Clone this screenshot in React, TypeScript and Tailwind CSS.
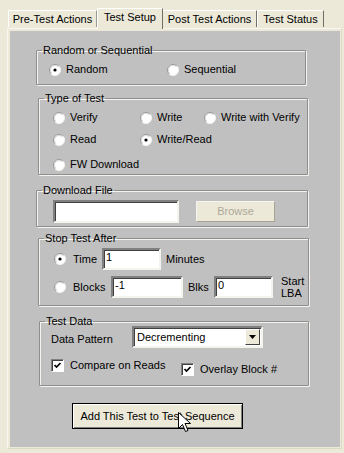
import React from "react";

const font = { fontFamily: '"Liberation Sans", Arial, sans-serif' };

function Radio({ checked = false }: { checked?: boolean }) {
  return (
    <svg width="12" height="12" viewBox="0 0 12 12" className="shrink-0">
      <circle cx="6" cy="6" r="5.5" fill="#fff" />
      <path d="M2.1 9.9 A5.5 5.5 0 0 1 9.9 2.1" stroke="#9a9a9a" fill="none" />
      <path d="M2.8 9.2 A4.5 4.5 0 0 1 9.2 2.8" stroke="#d8d8d8" fill="none" />
      <path d="M9.9 2.1 A5.5 5.5 0 0 1 2.1 9.9" stroke="#f4f3ee" fill="none" />
      {checked && <circle cx="6" cy="6" r="1.6" fill="#000" />}
    </svg>
  );
}

function Check() {
  return (
    <span className="w-[13px] h-[13px] shrink-0 bg-white border border-t-[#808080] border-l-[#808080] border-b-white border-r-white shadow-[inset_1px_1px_0_#404040] flex items-center justify-center">
      <svg width="9" height="9" viewBox="0 0 9 9">
        <path d="M1.5 4 L3.5 6 L7.5 2" stroke="#000" strokeWidth="1.7" fill="none" />
      </svg>
    </span>
  );
}

function Field({ value, className }: { value: string; className: string }) {
  return (
    <div
      className={`bg-white border-2 border-t-[#808080] border-l-[#808080] border-b-[#f4f3ee] border-r-[#f4f3ee] shadow-[inset_1px_1px_0_#404040] px-[2px] leading-[14px] ${className}`}
    >
      {value}
    </div>
  );
}

function Group({ title, className, children }: { title: string; className: string; children?: React.ReactNode }) {
  return (
    <fieldset
      className={`border border-[#8e8e8e] shadow-[1px_1px_0_#f4f3ee,inset_1px_1px_0_#f4f3ee] rounded-[1px] ${className}`}
    >
      <legend className="ml-[5px] px-[1px] leading-[13px]">{title}</legend>
      {children}
    </fieldset>
  );
}

function Opt({ label, checked, className = "" }: { label: string; checked?: boolean; className?: string }) {
  return (
    <div className={`flex items-center gap-[5px] leading-[13px] ${className}`}>
      <Radio checked={checked} />
      <span>{label}</span>
    </div>
  );
}

export default function App() {
  return (
    <div className="w-[344px] h-[453px] bg-[#ece9d8] text-[11px] text-black relative overflow-hidden" style={font}>
      {/* tabs */}
      <div className="flex items-end pt-[7px] pl-[8px] h-[28px] relative z-10">
        <div className="h-[17px] w-[89px] border-t border-l border-white border-r border-r-[#9a9a90] flex items-center justify-center leading-[13px] mb-px">
          Pre-Test Actions
        </div>
        <div className="h-[21px] w-[66px] bg-[#ece9d8] border-t border-l border-white border-r border-r-[#6f6f68] flex items-center justify-center leading-[13px] pb-[3px] -mb-px">
          Test Setup
        </div>
        <div className="h-[17px] w-[94px] border-t border-white border-r border-r-[#6f6f68] flex items-center justify-center leading-[13px] mb-px">
          Post Test Actions
        </div>
        <div className="h-[17px] w-[67px] border-t border-l border-white border-r border-r-[#6f6f68] flex items-center justify-center leading-[13px] mb-px">
          Test Status
        </div>
      </div>

      {/* panel */}
      <div className="ml-[7px] mr-[2px] h-[421px] border border-[#f7f6f0] border-r-[#dcd9c8] border-b-[#dcd9c8] bg-[#ece9d8] p-[2px] pr-[1px] pb-[1px]">
        <div className="h-full bg-[#c0c0c0] pt-[13px] flex flex-col">
          <Group title="Random or Sequential" className="ml-[26px] w-[270px] h-[41px]">
            <div className="flex pt-[6px] pl-[12px]">
              <Opt label="Random" checked className="w-[118px]" />
              <Opt label="Sequential" />
            </div>
          </Group>

          <Group title="Type of Test" className="ml-[28px] mt-[7px] w-[270px] h-[83px]">
            <div className="pl-[14px] pt-[6px] flex flex-col gap-[9px]">
              <div className="flex">
                <Opt label="Verify" className="w-[87px]" />
                <Opt label="Write" className="w-[64px]" />
                <Opt label="Write with Verify" />
              </div>
              <div className="flex">
                <Opt label="Read" className="w-[87px]" />
                <Opt label="Write/Read" checked />
              </div>
              <div className="flex mt-[3px]">
                <Opt label="FW Download" />
              </div>
            </div>
          </Group>

          <Group title="Download File" className="ml-[26px] mt-[9px] w-[272px] h-[43px]">
            <div className="flex items-center pl-[16px] pt-[3px]">
              <Field value="" className="w-[126px] h-[23px]" />
              <div className="ml-[17px] w-[79px] h-[21px] bg-[#ece9d8] border border-[#f6f5f0] border-r-[#a8a596] border-b-[#a8a596] text-[#aca899] flex items-center justify-center leading-[13px]">
                Browse
              </div>
            </div>
          </Group>

          <Group title="Stop Test After" className="ml-[28px] mt-[5px] w-[271px] h-[74px]">
            <div className="pl-[15px] pt-[3px] flex flex-col gap-[5px]">
              <div className="flex items-center">
                <Radio checked />
                <span className="ml-[7px] w-[29px]">Time</span>
                <Field value="1" className="w-[59px] h-[22px]" />
                <span className="ml-[5px]">Minutes</span>
              </div>
              <div className="flex items-center">
                <Radio />
                <span className="ml-[7px] w-[38px]">Blocks</span>
                <Field value="-1" className="w-[72px] h-[22px]" />
                <span className="ml-[5px] w-[26px]">Blks</span>
                <Field value="0" className="w-[59px] h-[22px]" />
                <span className="ml-[8px] leading-[12px]">
                  Start
                  <br />
                  LBA
                </span>
              </div>
            </div>
          </Group>

          <Group title="Test Data" className="ml-[29px] mt-[9px] w-[270px] h-[71px]">
            <div className="pl-[11px]">
              <div className="flex items-center -mt-[2px]">
                <span className="w-[81px] mt-[5px]">Data Pattern</span>
                <div className="w-[131px] h-[22px] bg-white border-2 border-t-[#808080] border-l-[#808080] border-b-[#f4f3ee] border-r-[#f4f3ee] shadow-[inset_1px_1px_0_#404040] flex items-center pl-[3px] pr-[1px]">
                  <span className="flex-1 leading-[14px]">Decrementing</span>
                  <div className="w-[15px] h-[16px] bg-[#ece9d8] border border-[#fff] border-r-[#404040] border-b-[#404040] flex items-center justify-center">
                    <svg width="7" height="4" viewBox="0 0 7 4">
                      <path d="M0 0 H7 L3.5 4 Z" fill="#000" />
                    </svg>
                  </div>
                </div>
              </div>
              <div className="flex items-start mt-[11px]">
                <div className="flex items-center gap-[6px] w-[130px]">
                  <Check />
                  <span className="leading-[13px]">Compare on Reads</span>
                </div>
                <div className="flex items-center gap-[6px] mt-[4px]">
                  <Check />
                  <span className="leading-[13px]">Overlay Block #</span>
                </div>
              </div>
            </div>
          </Group>

          <div className="ml-[62px] mt-[17px] w-[171px] h-[26px] bg-[#ece9d8] border border-black shadow-[inset_1px_1px_0_#fff,inset_-1px_-1px_0_#808080] flex items-center justify-center leading-[13px]">
            Add This Test to Test Sequence
          </div>
        </div>
      </div>

      {/* mouse pointer */}
      <svg className="absolute left-[178px] top-[412px]" width="13" height="22" viewBox="0 0 13 22">
        <path
          d="M0.5 0.5 L0.5 16.5 L4.5 12.5 L7.5 19.5 L10 18.5 L7 11.5 L12.5 11.5 Z"
          fill="#fff"
          stroke="#000"
          strokeWidth="1"
          strokeLinejoin="miter"
        />
      </svg>
    </div>
  );
}
